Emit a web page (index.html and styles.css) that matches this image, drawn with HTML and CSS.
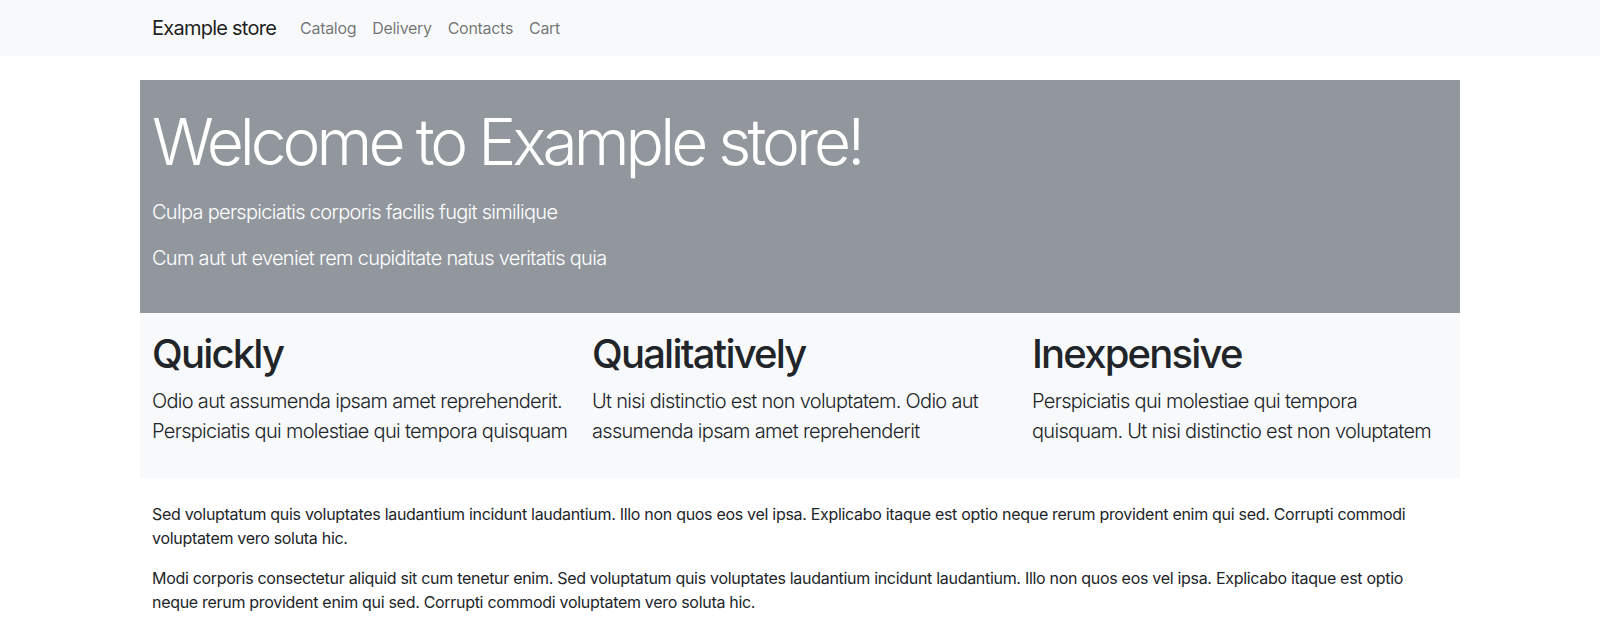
FILE: index.html
```html
<!DOCTYPE html>
<html lang="en">
<head>
<meta charset="utf-8">
<title>Example store</title>
<link rel="stylesheet" href="styles.css">
</head>
<body>
<nav class="navbar">
  <div class="container nav-inner">
    <a class="brand" href="#">Example store</a>
    <ul class="nav-links">
      <li><a class="nav-link" href="#">Catalog</a></li>
      <li><a class="nav-link" href="#">Delivery</a></li>
      <li><a class="nav-link" href="#">Contacts</a></li>
      <li><a class="nav-link" href="#">Cart</a></li>
    </ul>
  </div>
</nav>
<main>
  <section class="container hero">
    <h1 class="hero-title">Welcome to Example store!</h1>
    <p class="lead">Culpa perspiciatis corporis facilis fugit similique</p>
    <p class="lead">Cum aut ut eveniet rem cupiditate natus veritatis quia</p>
  </section>
  <section class="container features">
    <div class="feature">
      <h2 class="feature-title">Quickly</h2>
      <p class="lead dark">Odio aut assumenda ipsam amet reprehenderit. Perspiciatis qui molestiae qui tempora quisquam</p>
    </div>
    <div class="feature">
      <h2 class="feature-title">Qualitatively</h2>
      <p class="lead dark">Ut nisi distinctio est non voluptatem. Odio aut assumenda ipsam amet reprehenderit</p>
    </div>
    <div class="feature">
      <h2 class="feature-title">Inexpensive</h2>
      <p class="lead dark">Perspiciatis qui molestiae qui tempora quisquam. Ut nisi distinctio est non voluptatem</p>
    </div>
  </section>
  <section class="container content">
    <p>Sed voluptatum quis voluptates laudantium incidunt laudantium. Illo non quos eos vel ipsa. Explicabo itaque est optio neque rerum provident enim qui sed. Corrupti commodi voluptatem vero soluta hic.</p>
    <p>Modi corporis consectetur aliquid sit cum tenetur enim. Sed voluptatum quis voluptates laudantium incidunt laudantium. Illo non quos eos vel ipsa. Explicabo itaque est optio neque rerum provident enim qui sed. Corrupti commodi voluptatem vero soluta hic.</p>
  </section>
</main>
</body>
</html>
```
FILE: styles.css
```css
* { box-sizing: border-box; }
html, body { margin: 0; }
body {
  font-family: Inter, "Noto Sans", "Liberation Sans", sans-serif;
  font-size: 16px;
  line-height: 1.5;
  letter-spacing: -0.3px;
  color: #212529;
  background: #fff;
}
.container {
  width: 1320px;
  margin: 0 auto;
  padding: 0 12px;
}
.navbar {
  background: #f8f9fa;
  padding: 8px 0;
}
.nav-inner {
  display: flex;
  align-items: center;
}
.brand {
  font-size: 20px;
  line-height: 30px;
  padding: 5px 0;
  margin-right: 16px;
  letter-spacing: -0.75px;
  color: rgba(0,0,0,.9);
  text-decoration: none;
}
.nav-links {
  display: flex;
  list-style: none;
  margin: 0;
  padding: 0;
}
.nav-link {
  display: block;
  padding: 8px;
  color: rgba(0,0,0,.55);
  text-decoration: none;
  line-height: 24px;
}
.hero {
  margin-top: 24px;
  background: #92979e;
  color: #fff;
  padding-top: 24px;
  padding-bottom: 24px;
}
.hero-title {
  margin: 0 0 16px;
  font-size: 64px;
  font-weight: 300;
  line-height: 1.2;
  letter-spacing: -3.95px;
}
.lead {
  font-size: 20px;
  font-weight: 300;
  line-height: 30px;
  letter-spacing: -0.7px;
  margin: 0 0 16px;
}
.features {
  background: #f8f9fa;
  display: grid;
  grid-template-columns: repeat(3, 1fr);
  padding: 17px 0 16px;
}
.feature {
  padding: 0 12px;
}
.feature-title {
  margin: 0 0 8px;
  font-size: 40px;
  font-weight: 500;
  line-height: 1.2;
  letter-spacing: -1.8px;
}
.dark { color: #212529; }
.content {
  padding-top: 24px;
}
.content p {
  margin: 0 0 16px;
}
```
